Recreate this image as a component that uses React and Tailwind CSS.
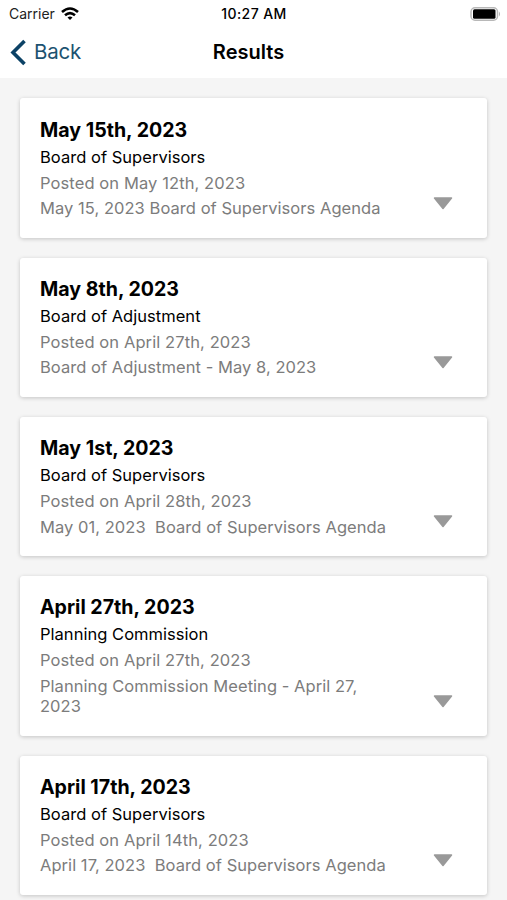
const cards = [
  { date: 'May 15th, 2023', board: 'Board of Supervisors', posted: 'Posted on May 12th, 2023', title: ['May 15, 2023 Board of Supervisors Agenda'] },
  { date: 'May 8th, 2023', board: 'Board of Adjustment', posted: 'Posted on April 27th, 2023', title: ['Board of Adjustment - May 8, 2023'] },
  { date: 'May 1st, 2023', board: 'Board of Supervisors', posted: 'Posted on April 28th, 2023', title: ['May 01, 2023  Board of Supervisors Agenda'] },
  { date: 'April 27th, 2023', board: 'Planning Commission', posted: 'Posted on April 27th, 2023', title: ['Planning Commission Meeting - April 27,', '2023'] },
  { date: 'April 17th, 2023', board: 'Board of Supervisors', posted: 'Posted on April 14th, 2023', title: ['April 17, 2023  Board of Supervisors Agenda'] },
];

function Card({ date, board, posted, title }) {
  return (
    <article className="flex shrink-0 justify-between rounded-[3px] bg-white pt-[18.5px] pr-[34px] pb-[19px] pl-[19.7px] shadow-[0_1px_4px_rgba(0,0,0,0.2)]">
      <div className="whitespace-pre text-[16.5px] leading-[20.7px] text-[#7c7c7c]">
        <h2 className="text-[19.6px] leading-[26px] font-bold text-black">{date}</h2>
        <p className="mt-[4px] tracking-[0.03px] text-black">{board}</p>
        <p className="mt-[5px] tracking-[0.1px]">{posted}</p>
        <div className="mt-[5px] tracking-[0.05px]">{title.map((t) => <p key={t}>{t}</p>)}</div>
      </div>
      <svg className="mb-[9px] h-[13px] w-5 self-end" viewBox="0 0 20 13">
        <path d="M1.5 1h17L10 11.5z" fill="#999" stroke="#999" strokeWidth="1.5" strokeLinejoin="round" />
      </svg>
    </article>
  );
}

export default function App() {
  return (
    <div className="flex h-[900px] w-[507px] flex-col overflow-hidden bg-[#f5f5f5] font-['Inter',sans-serif]">
      <header className="h-[78px] shrink-0 bg-white">
        <div className="grid h-[27px] grid-cols-3 items-center pr-[6px] pl-[9px] text-[14px] text-black">
          <div className="flex items-center gap-[6px]"><span className="text-[#222]">Carrier</span>
            <svg className="h-[14px] w-[18px]" viewBox="0 0 18 14" fill="none" stroke="black" strokeWidth="2.6"><path d="M1 5Q9-2 17 5M4 8.3Q9 4 14 8.3"/><path d="M6.5 10.5Q9 8.5 11.5 10.5L9 13z" fill="black" stroke="none"/></svg>
          </div>
          <span className="-ml-[2px] text-center font-medium tracking-[0.4px]">10:27 AM</span>
          <svg className="h-[14px] w-[31px] justify-self-end" viewBox="0 0 31 14"><rect x="1" y=".75" width="26.5" height="12.5" rx="4" fill="none" stroke="#b8b8b8" strokeWidth="1.5"/><rect x="3" y="2.3" width="22.5" height="9.4" rx="1.5"/><path d="M29 4.5q2 2.5 0 5z" fill="#b0b0b0"/></svg>
        </div>
        <div className="grid h-[50px] grid-cols-3 items-center pr-5 pl-[10px]">
          <div className="flex items-center gap-[8px] text-[20.5px] text-[#1c5270]">
            <svg className="h-[27px] w-4" viewBox="0 0 16 27" fill="none" stroke="#0c4266" strokeWidth="3.6"><path d="M14.5 2L3 13.5 14.5 25"/></svg>
            <span className="tracking-[-0.2px]">Back</span>
          </div>
          <h1 className="text-center text-[20px] font-semibold text-black">Results</h1>
        </div>
      </header>
      <main className="flex flex-col gap-[19.5px] pr-[19.7px] pl-[20.3px] pt-[20.4px]">
        {cards.map((c) => <Card key={c.date} {...c} />)}
      </main>
    </div>
  );
}
